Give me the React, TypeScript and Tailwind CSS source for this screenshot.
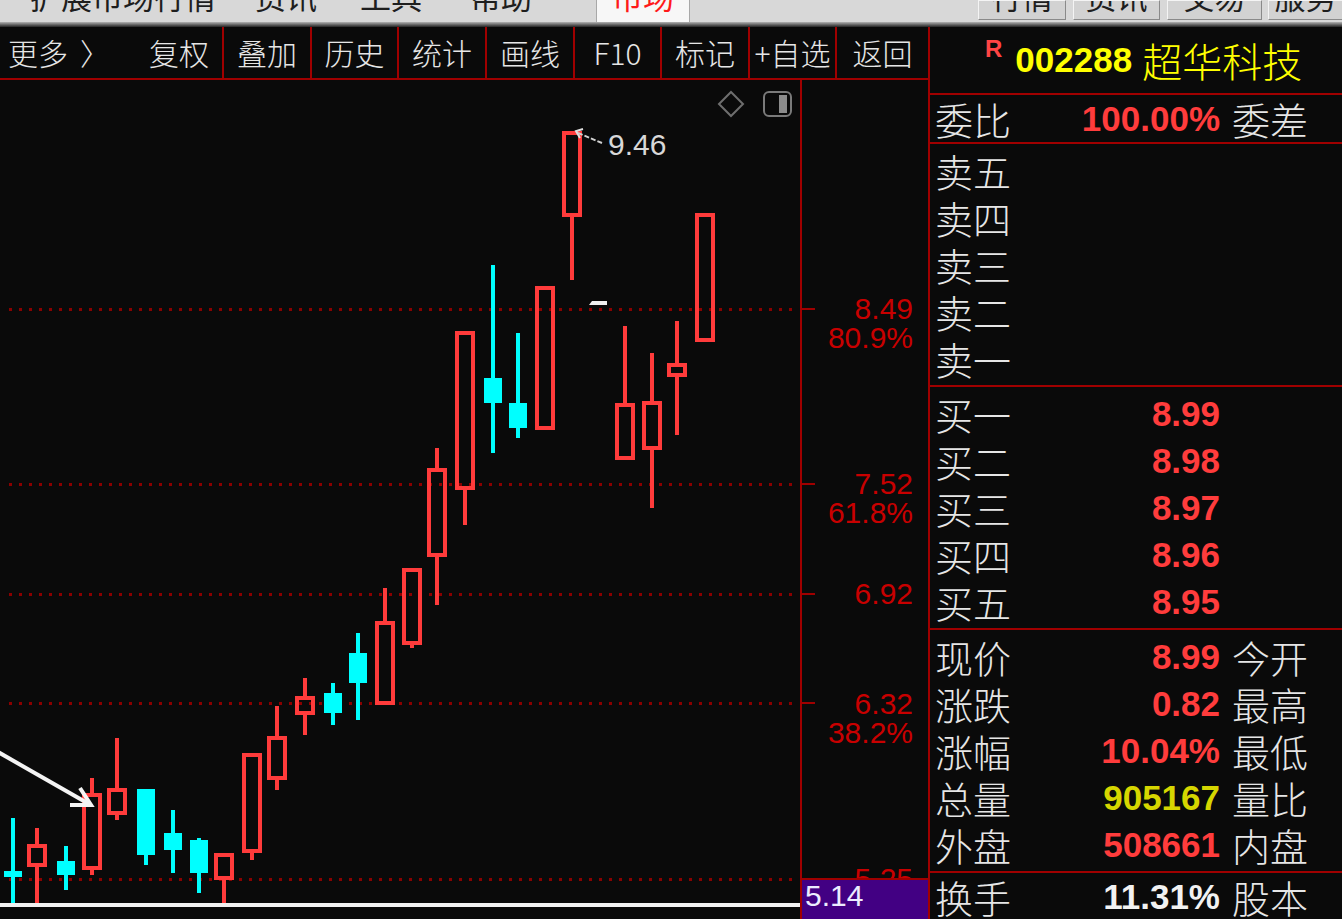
import React from "react";

type Candle = [number, number, number, number, number, "r" | "c"];

const candles: Candle[] = [
  [13, 818, 871, 877, 903, "c"],
  [37, 828, 844, 867, 903, "r"],
  [66, 846, 861, 875, 890, "c"],
  [92, 778, 793, 870, 875, "r"],
  [117, 738, 788, 815, 820, "r"],
  [146, 789, 789, 855, 865, "c"],
  [173, 810, 833, 850, 873, "c"],
  [199, 838, 840, 873, 893, "c"],
  [224, 853, 853, 880, 903, "r"],
  [252, 753, 753, 853, 860, "r"],
  [277, 706, 736, 780, 790, "r"],
  [305, 678, 696, 715, 735, "r"],
  [333, 683, 693, 713, 725, "c"],
  [358, 633, 653, 683, 720, "c"],
  [385, 588, 621, 705, 705, "r"],
  [412, 568, 568, 645, 648, "r"],
  [437, 448, 468, 557, 605, "r"],
  [465, 331, 331, 490, 525, "r"],
  [493, 265, 378, 403, 453, "c"],
  [518, 333, 403, 428, 438, "c"],
  [545, 286, 286, 430, 430, "r"],
  [572, 131, 131, 217, 280, "r"],
  [625, 326, 403, 460, 460, "r"],
  [652, 353, 401, 450, 508, "r"],
  [677, 321, 363, 377, 435, "r"],
  [705, 213, 213, 342, 342, "r"],
];

const grid = [309, 484, 594, 703, 879];
const RED = "#ff3b3b";
const CYAN = "#00ffff";
const T = 4;

function Chart() {
  return (
    <svg width={800} height={839} viewBox="0 80 800 839" className="block shrink-0">
      {grid.map((y) => (
        <line
          key={y}
          x1={9}
          x2={798}
          y1={y}
          y2={y}
          stroke="#8a0000"
          strokeWidth={3}
          strokeDasharray="3 7"
          shapeRendering="crispEdges"
        />
      ))}
      <rect x={0} y={903} width={800} height={4} fill="#f2f2f2" shapeRendering="crispEdges" />
      {candles.map(([cx, hi, top, bot, lo, t]) =>
        t === "c" ? (
          <g key={cx} fill={CYAN} shapeRendering="crispEdges">
            <rect x={cx - 2} y={hi} width={4} height={lo - hi} />
            <rect x={cx - 9} y={top} width={18} height={Math.max(bot - top, 5)} />
          </g>
        ) : (
          <g key={cx} fill={RED} shapeRendering="crispEdges">
            {top > hi && <rect x={cx - 2} y={hi} width={4} height={top - hi + 1} />}
            {lo > bot && <rect x={cx - 2} y={bot - 1} width={4} height={lo - bot + 1} />}
            <rect x={cx - 10} y={top} width={20} height={T} />
            <rect x={cx - 10} y={bot - T} width={20} height={T} />
            <rect x={cx - 10} y={top} width={T} height={bot - top} />
            <rect x={cx + 10 - T} y={top} width={T} height={bot - top} />
          </g>
        )
      )}
      {/* flat doji */}
      <path d="M592 301 H607 V305 H589 Z" fill="#f0f0f0" />
      {/* 9.46 annotation */}
      <polyline points="583,129 576,131 580,138" fill="none" stroke="#e0e0e0" strokeWidth={2} />
      <line x1={578} y1={133} x2={602} y2={143} stroke="#d0d0d0" strokeWidth={2} strokeDasharray="5 2" />
      <text
        x={608}
        y={155}
        fill="#d8d8d8"
        fontSize={30}
        fontFamily="'Liberation Sans', Arial, sans-serif"
      >
        9.46
      </text>
      {/* white arrow */}
      <line x1={-2} y1={752} x2={89} y2={804} stroke="#f4f4f4" strokeWidth={4} />
      <polyline points="70,805 91,805 80,788" fill="none" stroke="#f4f4f4" strokeWidth={4} />
      {/* top-right icons */}
      <path d="M731 92 L743 104 L731 116 L719 104 Z" fill="none" stroke="#6e6e6e" strokeWidth={2} />
      <rect x={764} y={92} width={27} height={24} rx={5} fill="none" stroke="#7a7a7a" strokeWidth={2} />
      <rect x={779} y={95} width={8} height={18} fill="#8c8c8c" />
    </svg>
  );
}

const axisLabels: { t: string; cls: string }[] = [
  { t: "8.49", cls: "top-[214px]" },
  { t: "80.9%", cls: "top-[243px]" },
  { t: "7.52", cls: "top-[389px]" },
  { t: "61.8%", cls: "top-[418px]" },
  { t: "6.92", cls: "top-[499px]" },
  { t: "6.32", cls: "top-[609px]" },
  { t: "38.2%", cls: "top-[638px]" },
  { t: "5.25", cls: "top-[784px]" },
];

const ticks = ["top-[228px]", "top-[403px]", "top-[513px]", "top-[622px]", "top-[798px]"];

function Axis() {
  return (
    <div className="relative w-[128px] h-[839px] border-l-2 border-[#a00000] overflow-hidden font-['Liberation_Sans',Arial,sans-serif] text-[30px] leading-[30px] text-[#c80000]">
      {ticks.map((c) => (
        <div key={c} className={`absolute left-0 w-[13px] h-[2px] bg-[#a00000] ${c}`} />
      ))}
      {axisLabels.map((l) => (
        <div key={l.t} className={`absolute right-[15px] ${l.cls}`}>
          {l.t}
        </div>
      ))}
      <div className="absolute left-0 right-0 bottom-0 h-[41px] border-t-2 border-[#a00000] bg-[#420083] pl-[3px] pt-[1px] text-[#ececff]">
        5.14
      </div>
    </div>
  );
}

const tools: { t: string; w: string }[] = [
  { t: "叠加", w: "w-[88px]" },
  { t: "历史", w: "w-[87px]" },
  { t: "统计", w: "w-[88px]" },
  { t: "画线", w: "w-[88px]" },
  { t: "F10", w: "w-[87px]" },
  { t: "标记", w: "w-[88px]" },
  { t: "+自选", w: "w-[87px]" },
  { t: "返回", w: "flex-1" },
];

function Toolbar() {
  return (
    <div className="flex h-[53px] border-b-2 border-[#a00000] text-[30px] leading-[51px] text-[#e6e6e6] font-['Noto_Sans_CJK_SC','Noto_Sans',sans-serif] font-light">
      <div className="w-[136px] pl-[8px] flex">
        <span>更多</span>
        <span className="ml-[12px]">〉</span>
      </div>
      <div className="w-[86px] text-center">复权</div>
      {tools.map((x) => (
        <div key={x.t} className={`${x.w} border-l-2 border-[#a00000] text-center`}>
          {x.t}
        </div>
      ))}
    </div>
  );
}

function TopBar() {
  return (
    <div className="h-[22px] bg-[#d8d8d8] flex items-start overflow-hidden text-[31px] leading-[30px] text-[#1e1e1e] font-['Noto_Sans_CJK_SC','Noto_Sans',sans-serif]">
      <span className="ml-[30px] -mt-[19px] shrink-0">扩展市场行情</span>
      <span className="ml-[39px] -mt-[19px] shrink-0">资讯</span>
      <span className="ml-[43px] -mt-[19px] shrink-0">工具</span>
      <span className="ml-[48px] -mt-[19px] shrink-0">帮助</span>
      <div className="ml-[64px] w-[94px] h-[22px] shrink-0 bg-[#f7f7f7] border-x border-[#a8a8a8] text-center text-[#ff1a1a] overflow-hidden">
        <div className="-mt-[19px]">市场</div>
      </div>
      <div className="flex-1" />
      <div className="w-[88px] h-[20px] shrink-0 bg-[#d2d2d2] border border-t-[#f4f4f4] border-l-[#f4f4f4] border-r-[#8a8a8a] border-b-[#8a8a8a] text-center overflow-hidden">
        <div className="-mt-[20px]">行情</div>
      </div>
      <div className="ml-[7px] w-[87px] h-[20px] shrink-0 bg-[#d2d2d2] border border-t-[#f4f4f4] border-l-[#f4f4f4] border-r-[#8a8a8a] border-b-[#8a8a8a] text-center overflow-hidden">
        <div className="-mt-[20px]">资讯</div>
      </div>
      <div className="ml-[7px] w-[95px] h-[20px] shrink-0 bg-[#d2d2d2] border border-t-[#f4f4f4] border-l-[#f4f4f4] border-r-[#8a8a8a] border-b-[#8a8a8a] text-center overflow-hidden">
        <div className="-mt-[20px]">交易</div>
      </div>
      <div className="ml-[6px] w-[74px] h-[20px] shrink-0 bg-[#d2d2d2] border border-t-[#f4f4f4] border-l-[#f4f4f4] border-r-0 border-b-[#8a8a8a] text-center overflow-hidden">
        <div className="-mt-[20px]">服务</div>
      </div>
    </div>
  );
}

function Row({ l, v, vc, r }: { l: string; v?: string; vc?: string; r?: string }) {
  return (
    <div className="flex items-center h-[47px] pl-[5px] shrink-0">
      <span className="w-[90px] shrink-0 text-[38px] leading-[47px] text-[#e6e6e6] font-['Noto_Sans_CJK_SC','Noto_Sans',sans-serif] font-light">
        {l}
      </span>
      <span
        className={`w-[195px] shrink-0 text-right text-[35px] leading-[47px] font-bold font-['Liberation_Sans',Arial,sans-serif] ${vc ?? ""}`}
      >
        {v ?? ""}
      </span>
      {r && (
        <span className="ml-[12px] shrink-0 text-[38px] leading-[47px] text-[#e6e6e6] font-['Noto_Sans_CJK_SC','Noto_Sans',sans-serif] font-light">
          {r}
        </span>
      )}
    </div>
  );
}

function RightPanel() {
  const red = "text-[#ff3c3c]";
  return (
    <div className="w-[414px] h-[892px] border-l-2 border-[#a00000] flex flex-col overflow-hidden">
      <div className="h-[68px] shrink-0 border-b-2 border-[#a00000] flex items-center pl-[55px]">
        <span className="self-start mt-[10px] text-[24px] leading-[24px] font-bold text-[#ff4444] font-['Liberation_Sans',Arial,sans-serif]">
          R
        </span>
        <span className="ml-[13px] text-[35px] leading-[40px] font-bold text-[#ffff00] font-['Liberation_Sans',Arial,sans-serif]">
          002288
        </span>
        <span className="ml-[10px] text-[40px] leading-[48px] text-[#ffff00] font-['Noto_Sans_CJK_SC','Noto_Sans',sans-serif] font-light">
          超华科技
        </span>
      </div>
      <div className="h-[49px] shrink-0 border-b-2 border-[#a00000]">
        <Row l="委比" v="100.00%" vc={red} r="委差" />
      </div>
      <div className="h-[243px] shrink-0 border-b-2 border-[#a00000] py-[3px] flex flex-col">
        <Row l="卖五" />
        <Row l="卖四" />
        <Row l="卖三" />
        <Row l="卖二" />
        <Row l="卖一" />
      </div>
      <div className="h-[243px] shrink-0 border-b-2 border-[#a00000] py-[3px] flex flex-col">
        <Row l="买一" v="8.99" vc={red} />
        <Row l="买二" v="8.98" vc={red} />
        <Row l="买三" v="8.97" vc={red} />
        <Row l="买四" v="8.96" vc={red} />
        <Row l="买五" v="8.95" vc={red} />
      </div>
      <div className="h-[243px] shrink-0 border-b-2 border-[#a00000] py-[3px] flex flex-col">
        <Row l="现价" v="8.99" vc={red} r="今开" />
        <Row l="涨跌" v="0.82" vc={red} r="最高" />
        <Row l="涨幅" v="10.04%" vc={red} r="最低" />
        <Row l="总量" v="905167" vc="text-[#d6d600]" r="量比" />
        <Row l="外盘" v="508661" vc={red} r="内盘" />
      </div>
      <Row l="换手" v="11.31%" vc="text-[#f2f2f2]" r="股本" />
    </div>
  );
}

export default function App() {
  return (
    <div className="w-[1342px] h-[919px] overflow-hidden bg-[#0a0a0a] flex flex-col">
      <TopBar />
      <div className="h-[5px] shrink-0 bg-linear-to-b from-[#b4b4b4] via-[#6a6a6a] to-[#262626]" />
      <div className="flex h-[892px]">
        <div className="w-[928px] shrink-0 flex flex-col">
          <Toolbar />
          <div className="flex h-[839px]">
            <Chart />
            <Axis />
          </div>
        </div>
        <RightPanel />
      </div>
    </div>
  );
}
